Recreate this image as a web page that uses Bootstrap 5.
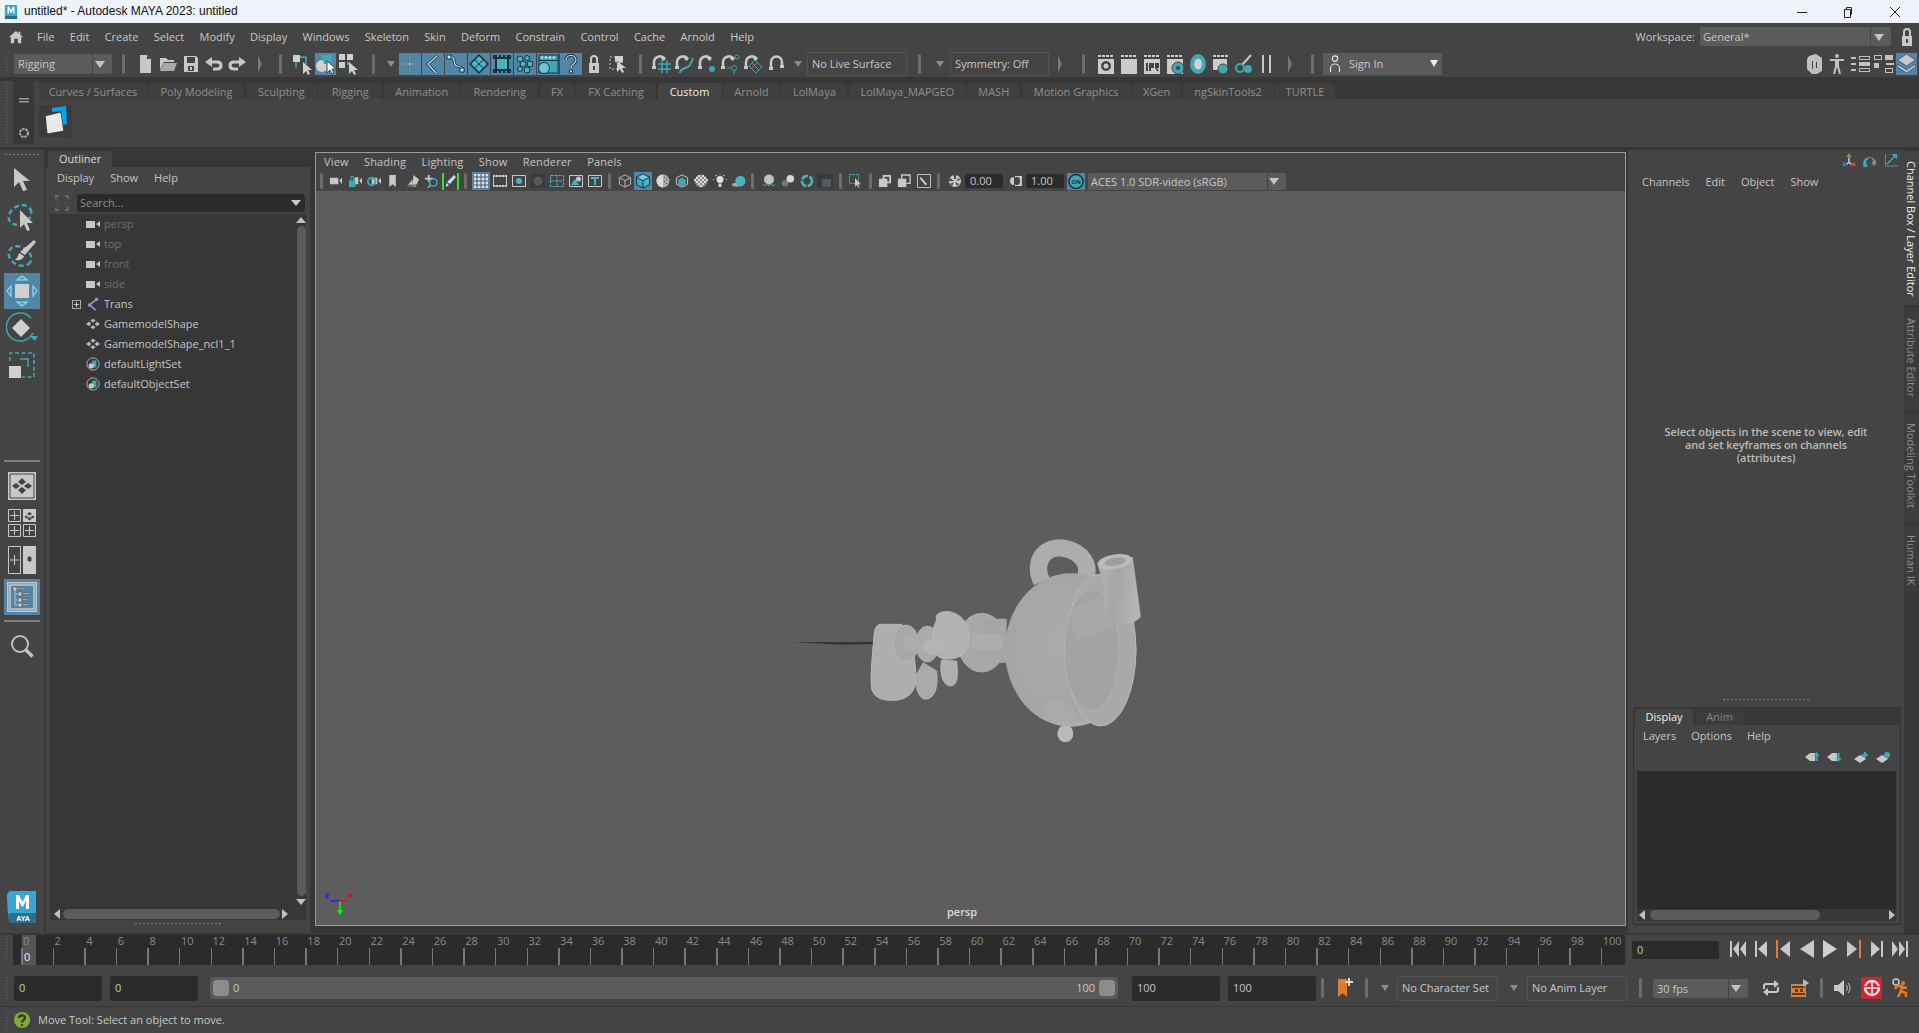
<!DOCTYPE html>
<html lang="en">
<head>
<meta charset="UTF-8" />
<meta name="viewport" content="width=device-width, initial-scale=1" />
<title>untitled* - Autodesk MAYA 2023: untitled</title>
<link href="https://cdn.jsdelivr.net/npm/bootstrap@5.3.0/dist/css/bootstrap.min.css" rel="stylesheet" />
<style>
  html, body { height: 100%; }
  body { width: 1919px; height: 1033px; overflow: hidden; background: #444; color: #c8c8c8; font: 11px/14px "Open Sans", sans-serif; }
  svg { flex: none; display: block; }
  .l1 { margin-left: 1px; } .l2 { margin-left: 2px; } .l3 { margin-left: 3px; } .l4 { margin-left: 4px; } .l5 { margin-left: 5px; }
  .l6 { margin-left: 6px; } .l7 { margin-left: 7px; } .l8 { margin-left: 8px; } .l9 { margin-left: 9px; } .l10 { margin-left: 10px; }
  .l11 { margin-left: 11px; } .l12 { margin-left: 12px; } .l13 { margin-left: 13px; } .l14 { margin-left: 14px; } .l15 { margin-left: 15px; } .l17 { margin-left: 17px; } .l19 { margin-left: 19px; } .l20 { margin-left: 20px; }
  .i14 { width: 14px; height: 14px; } .i16 { width: 16px; height: 16px; } .i18 { width: 18px; height: 18px; } .i20 { width: 20px; height: 20px; } .i22 { width: 22px; height: 22px; }
  .grip { width: 4px; flex: none; background: radial-gradient(circle, #6f6f6f 0.8px, transparent 1px) 0 0 / 3px 3px; }
  .vbar { width: 3px; height: 20px; flex: none; border-radius: 2px; background: #6d6d6d; }
  .vbar-s { height: 16px; }
  .darr { width: 0; height: 0; flex: none; border: 4px solid transparent; border-top: 6px solid #8b8b8b; border-bottom: 0; }
  .rarr { width: 0; height: 0; flex: none; border: 9px solid transparent; border-left: 4px solid #777; border-right: 0; }
  .combo { background: #5b5b5b; color: #c8c8c8; border-radius: 2px; position: relative; }
  .combo::after { content: ""; position: absolute; right: 7px; top: 50%; margin-top: -3px; border: 5px solid transparent; border-top: 7px solid #c4c4c4; border-bottom: 0; }
  .fieldbox { background: #2b2b2b; color: #c8c8c8; border-radius: 2px; padding-left: 5px; display: flex; align-items: center; }
  .outbox { border: 1px solid #545454; border-radius: 2px; color: #c8c8c8; display: flex; align-items: center; padding-left: 4px; height: 24px; }

  #titlebar { height: 23px; background: #eef3fa; color: #111; font: 12px/23px "Liberation Sans", sans-serif; flex: none; }
  #menubar { height: 27px; flex: none; padding-left: 9px; }
  #menubar .items { margin-left: 14px; gap: 15.35px; }
  #statusline { height: 27px; flex: none; padding-left: 5px; }
  #statusline .grip { height: 20px; }
  .rigging { width: 98px; height: 20px; line-height: 20px; padding-left: 4px; }
  .rigging::before { content: ""; position: absolute; left: 78px; top: 0; bottom: 0; width: 1px; background: #444; }
  .bluegrp { gap: 1px; }
  .bluecell { width: 22px; height: 22px; background: #5285a6; display: flex; align-items: center; justify-content: center; }
  .hot { background: #5285a6; display: flex; align-items: center; justify-content: center; }
  .hot21 { width: 21px; height: 22px; }
  .signin { width: 119px; height: 22px; background: #5b5b5b; display: flex; align-items: center; padding-left: 5px; gap: 7px; position: relative; }
  .signin::after { content: ""; position: absolute; right: 4px; top: 7px; border: 4px solid transparent; border-top: 7px solid #eee; border-bottom: 0; }
  .wksp { width: 191px; height: 19px; line-height: 19px; padding-left: 3px; }
  .wksp::before { content: ""; position: absolute; right: 20px; top: 0; bottom: 0; width: 1px; background: #444; }

  #darkline { height: 4px; flex: none; background: #373737; }
  #shelf { height: 66px; flex: none; padding-left: 5px; }
  #shelf .grip { height: 63px; }
  .shelfside { width: 21px; height: 63px; background: #373737; display: flex; flex-direction: column; align-items: center; padding-top: 17px; margin-left: 4px; }
  .shelfmain { flex: 1; margin-left: 5px; }
  .shelftabs { height: 18px; background: #373737; padding-top: 2px; gap: 1.44px; }
  .shelftabs .stab { height: 16px; line-height: 18px; background: #3f3f3f; color: #8f8f8f; text-align: center; border-radius: 3px 3px 0 0; flex: none; overflow: hidden; }
  .shelftabs .stab.on { background: #444; color: #eee; }
  .shelficon { width: 33px; height: 32px; background: #3c3c3c; border-radius: 3px; margin-top: 6px; }
  #sepline { height: 3px; flex: none; background: #373737; }

  #mainrow { height: 783px; flex: none; background: #373737; }
  #toolbox { width: 44px; flex: none; background: #444; position: relative; }
  .toolbtn { width: 36px; height: 36px; display: flex; align-items: center; justify-content: center; margin-left: 4px; margin-top: 1px; flex: none; }
  .toolsep { height: 2px; width: 36px; background: #7d7d7d; margin-left: 4px; flex: none; }
  .mayalogo { margin: auto 0 10px 7px; }
  #outliner { width: 264px; flex: none; margin-left: 2px; }
  .otab { width: 64px; height: 16px; background: #444; color: #ddd; border-radius: 3px 3px 0 0; line-height: 16px; padding-left: 11px; margin-left: 2px; margin-top: 1px; }
  .opanel { flex: 1; background: #444; display: flex; flex-direction: column; padding: 0 4px 8px 4px; min-height: 0; }
  .omenu { gap: 16px; height: 22px; padding-left: 7px; padding-top: 4px; color: #c4c4c4; }
  .osearch { height: 18px; margin-top: 5px; margin-left: 5px; margin-right: 1px; }
  .osearchbox { flex: 1; margin-left: 8px; background: #2b2b2b; color: #8d8d8d; border-radius: 2px; line-height: 18px; padding-left: 3px; position: relative; }
  .osearchbox::after { content: ""; position: absolute; right: 4px; top: 6px; border: 5px solid transparent; border-top: 6px solid #c8c8c8; border-bottom: 0; }
  .olistwrap { flex: 1; min-height: 0; margin-top: 2px; }
  .olist { flex: 1; background: #373737; }
  .orow { height: 20px; display: flex; align-items: center; padding-left: 36px; position: relative; color: #c4c4c4; }
  .orow.dim { color: #707070; }
  .orow svg { margin-right: 4px; }
  .plus { position: absolute; left: 22px; top: 6px; width: 9px; height: 9px; border: 1px solid #a9a9a9; }
  .plus::before { content: ""; position: absolute; left: 1px; top: 3px; width: 5px; height: 1px; background: #ccc; }
  .plus::after { content: ""; position: absolute; left: 3px; top: 1px; width: 1px; height: 5px; background: #ccc; }
  .vscroll { width: 10px; background: #373737; display: flex; flex-direction: column; align-items: center; }
  .vthumb { flex: 1; width: 9px; background: #5b5b5b; border-radius: 5px; margin: 3px 0; }
  .tri-up { width: 0; height: 0; border: 5px solid transparent; border-bottom: 6px solid #c0c0c0; border-top: 0; margin-top: 3px; }
  .tri-dn { width: 0; height: 0; border: 5px solid transparent; border-top: 6px solid #c0c0c0; border-bottom: 0; margin-bottom: 3px; }
  .tri-lt { width: 0; height: 0; flex: none; border: 5px solid transparent; border-right: 6px solid #c0c0c0; border-left: 0; }
  .tri-rt { width: 0; height: 0; flex: none; border: 5px solid transparent; border-left: 6px solid #c0c0c0; border-right: 0; }
  .hscroll { height: 12px; flex: none; background: #373737; display: flex; align-items: center; padding: 0 1px; gap: 2px; }
  .hthumb { height: 10px; background: #5b5b5b; border-radius: 5px; }
  .griph { height: 3px; flex: none; background: radial-gradient(circle, #7b7b7b 0.7px, transparent 1px) 0 0 / 4px 3px; }

  #viewwrap { width: 1311px; flex: none; margin-left: 5px; margin-top: 2px; margin-bottom: 7px; border: 1px solid #9a9a9a; background: #444; display: flex; flex-direction: column; }
  .vmenu { height: 18px; flex: none; gap: 15.4px; letter-spacing: .15px; padding-left: 8px; padding-top: 2px; color: #c4c4c4; }
  .vtools { height: 20px; flex: none; padding-left: 4px; }
  .viewport3d { flex: 1; background: #5d5d5d; position: relative; }
  .model { position: absolute; left: 524px; top: 329px; overflow: visible; }
  .gizmo { position: absolute; left: 9px; bottom: 7px; }
  .perspname { position: absolute; left: 631px; bottom: 6px; color: #dcdcdc; font-weight: 600; }
  .vfield { background: #2b2b2b; height: 14px; line-height: 14px; padding-left: 5px; width: 38px; border-radius: 2px; }
  .acescombo { width: 198px; height: 17px; line-height: 17px; padding-left: 3px; }
  .acescombo::before { content: ""; position: absolute; right: 18px; top: 0; bottom: 0; width: 1px; background: #444; }
  .greenbox { width: 17px; height: 17px; border-left: 2px solid #2de52d; border-right: 2px solid #2de52d; }
  .tb-blue { width: 18px; height: 18px; }

  #rightcol { flex: 1; margin-left: 2px; min-width: 0; }
  .rpanel { width: 276px; flex: none; display: flex; flex-direction: column; background: #444; }
  .rtop { flex: none; height: 548px; position: relative; }
  .ricons { height: 24px; gap: 7px; padding-right: 6px; padding-top: 3px; justify-content: flex-end; }
  .rmenu { gap: 16px; padding-left: 14px; padding-top: 1px; color: #c4c4c4; }
  .rmsg { position: absolute; left: 0; right: 0; top: 275px; text-align: center; line-height: 13px; color: #bbb; font-weight: 600; letter-spacing: -.1px; }
  .rgrip { width: 88px; margin: 0 auto 0 94px; }
  .layerbox { margin: 6px 3px 0 5px; height: 218px; background: #373737; padding-top: 2px; display: flex; flex-direction: column; }
  .ltabs { height: 16px; gap: 3px; padding-left: 2px; flex: none; }
  .ltab { height: 16px; line-height: 15px; text-align: center; border-radius: 3px 3px 0 0; }
  .ltab.on { width: 58px; background: #444; color: #eee; }
  .ltab.off { width: 47px; background: #3c3c3c; color: #858585; }
  .lpanel { background: #444; flex: 1; display: flex; flex-direction: column; border: 1px solid #2f2f2f; border-top: 0; padding: 0 4px 3px 3px; }
  .lmenu { gap: 15px; height: 20px; padding-left: 6px; padding-top: 4px; color: #c4c4c4; flex: none; }
  .licons { height: 16px; margin-top: 4px; flex: none; justify-content: flex-end; padding-right: 5px; gap: 7px; }
  .llist { flex: 1; background: #2b2b2b; margin-top: 6px; }
  .sidetabs { width: 15px; flex: none; background: #373737; padding-top: 1px; gap: 3px; }
  .vtab { writing-mode: vertical-rl; background: #3c3c3c; color: #8c8c8c; line-height: 15px; width: 15px; padding-top: 10px; flex: none; }
  .vtab.on { background: #444; color: #eee; }
  #vt1 { height: 154px; } #vt2 { height: 102px; } #vt3 { height: 109px; } #vt4 { height: 68px; }

  #timeline { height: 35px; flex: none; background: #444; padding-left: 5px; }
  #timeline .grip { height: 28px; }
  .tslider { width: 1612px; height: 30px; background: #2b2b2b; margin-left: 4px; position: relative; display: flex; padding-left: 8px; }
  .tcell { width: 31.6px; flex: none; position: relative; color: #8a8a8a; padding-left: 2px; line-height: 11px; }
  .tcell::before { content: ""; position: absolute; left: 0; bottom: 0; width: 1.5px; height: 17px; background: #777; }
  .tcur { position: absolute; left: 9px; top: 0; bottom: 0; width: 14px; background: #555; }
  .tcurnum { position: absolute; left: 11px; top: 15px; color: #eee; }
  .tfield { width: 87px; height: 18px; margin-left: 7px; margin-top: 6px; }
  .playicons { gap: 9.1px; margin-left: 11px; margin-top: 5px; height: 18px; }

  #rangerow { height: 36px; flex: none; padding-left: 5px; }
  #rangerow .grip { height: 24px; }
  .rfield { width: 88px; height: 25px; }
  .rslider { width: 908px; height: 22px; background: #5b5b5b; border-radius: 4px; position: relative; display: flex; align-items: center; padding: 0 3px; }
  .rhandle { width: 16px; height: 16px; background: #8d8d8d; border-radius: 4px; flex: none; }
  .fps { width: 95px; height: 19px; line-height: 19px; padding-left: 4px; }
  .fps::before { content: ""; position: absolute; right: 19px; top: 0; bottom: 0; width: 1px; background: #444; }
  .redbox { width: 21px; height: 22px; background: #d2232f; display: flex; align-items: center; justify-content: center; }

  #helpline { height: 26px; flex: none; padding-left: 5px; background: #444; }
  #helpline .grip { height: 20px; }
  #topsep2 { height: 2px; flex: none; background: #373737; }
  #botsep { height: 1px; flex: none; background: #373737; }

  #winctl svg:nth-child(1) { margin-right: 36px; }
  #winctl svg:nth-child(2) { margin-right: 36px; }
  #winctl svg:nth-child(3) { margin-right: 18px; }
  #liveb { width: 100px; } #symb { width: 99px; }
  #charb { width: 101px; height: 25px; } #animb { width: 100px; height: 25px; }
  #toolgrip { margin: 3px 4px 0; }
  #t1 { margin-top: 5.5px; }
  #ts1 { margin-top: 77.5px; } #t7 { margin-top: 6px; } #ts2 { margin-top: 5px; } #t11 { margin-top: 5.5px; }
  #ogrip { width: 88px; margin: 2px auto 0; }
  #lthumb { width: 170px; }
  .logotxt { font: 700 7px "Liberation Sans", sans-serif; fill: #fff; }
  .ontxt { font: 700 6px "Liberation Sans", sans-serif; fill: #15303c; }
</style>
</head>
<body class="d-flex flex-column">

<svg width="0" height="0" class="position-absolute">
  <defs>
    <radialGradient id="bodygrad" cx="45%" cy="45%" r="60%"><stop offset="0" stop-color="#ababab"/><stop offset="0.8" stop-color="#a5a5a5"/><stop offset="1" stop-color="#b6b6b6"/></radialGradient>
    <linearGradient id="cupgrad" x1="0" x2="1" y1="0" y2="0.2"><stop offset="0" stop-color="#b4b4b4"/><stop offset="0.5" stop-color="#a6a6a6"/><stop offset="1" stop-color="#b4b4b4"/></linearGradient>

    <symbol id="home" viewBox="0 0 16 14"><path fill="#c8c8c8" d="M8 0 0 7h2v7h4V9h4v5h4V7h2l-3-2.600V1h-2v1.700z"/></symbol>
    <symbol id="page" viewBox="0 0 18 18"><path fill="#c8c8c8" d="M4 0h7l4 4v14H4z"/><path fill="#444" d="M11 0v4h4z"/></symbol>
    <symbol id="open" viewBox="0 0 18 18"><path fill="#c8c8c8" d="M1 3h6l2 2h6v2H5L1 15z"/><path fill="#a8a8a8" d="M5 8h13l-3 8H1z"/></symbol>
    <symbol id="save" viewBox="0 0 18 18"><path fill="#c8c8c8" d="M2 1h12l2 2v14H2z"/><path fill="#444" d="M5 2h8v6H5zM6 11h6v5H6z"/><path fill="#c8c8c8" d="M8 12h2v3H8z"/></symbol>
    <symbol id="undo" viewBox="0 0 18 18"><path fill="none" stroke="#c8c8c8" stroke-width="3" d="M5 7h7c2.500 0 4 1.500 4 3.500S14.500 14 12 14H8"/><path fill="#c8c8c8" d="M7 2v10L0 7z"/></symbol>
    <symbol id="redo" viewBox="0 0 18 18"><path fill="none" stroke="#c8c8c8" stroke-width="3" d="M13 7H6c-2.500 0-4 1.500-4 3.500S3.500 14 6 14h4"/><path fill="#c8c8c8" d="M11 2v10l7-5z"/></symbol>
    <symbol id="mode1" viewBox="0 0 21 22"><path fill="#d0d0d0" d="M1 2h7v7H1z"/><path fill="none" stroke="#3fa7b5" stroke-width="1.500" d="M8 4h6v7M4 9v6"/><path fill="#d0d0d0" d="M11 9v12l3-3 2 4 2-1-2-4h4z"/></symbol>
    <symbol id="mode2" viewBox="0 0 21 22"><circle cx="7" cy="13" r="6" fill="#d0d0d0"/><path fill="#3fa7b5" d="M6 2h11v9H9z"/><path fill="#fff" stroke="#444" d="M12 8v12l3-3 2 4 2-1-2-4h4z"/></symbol>
    <symbol id="mode3" viewBox="0 0 21 22"><path fill="#d0d0d0" d="M1 1h6v6H1zM9 1h6v6H9zM1 9h6v6H1z"/><path fill="#3fa7b5" d="M9 9h3v3H9z"/><path fill="#d0d0d0" d="M11 9v12l3-3 2 4 2-1-2-4h4z"/></symbol>
    <symbol id="m-cross" viewBox="0 0 22 22"><path fill="none" stroke="#1b3140" stroke-width="2.200" d="M11 2v18M2 11h18"/><path fill="none" stroke="#b8ecf2" d="M11 2v18M2 11h18"/></symbol>
    <symbol id="m-joint" viewBox="0 0 22 22"><path fill="none" stroke="#1b3140" stroke-width="2.800" d="M15 3 6 11l8 9"/><path fill="none" stroke="#b8ecf2" stroke-width="1.200" d="M15 3 6 11l8 9"/></symbol>
    <symbol id="m-curve" viewBox="0 0 22 22"><path fill="none" stroke="#1b3140" stroke-width="2.800" d="M4 4c8-1 3 8 8 9s4 2 5 5"/><path fill="none" stroke="#b8ecf2" stroke-width="1.200" d="M4 4c8-1 3 8 8 9s4 2 5 5"/><path fill="#b8ecf2" stroke="#1b3140" d="M2 2h4v4H2zM15 15h4v4h-4z"/></symbol>
    <symbol id="m-surf" viewBox="0 0 22 22"><path fill="#4bb2c0" stroke="#1b3140" stroke-width="1.500" d="M11 2l9 9-9 9-9-9z"/><path fill="none" stroke="#1b3140" d="M7 7l8 8M15 7l-8 8"/></symbol>
    <symbol id="m-deform" viewBox="0 0 22 22"><path fill="#4bb2c0" stroke="#1b3140" stroke-width="2" d="M5 5h12v12H5z"/><path fill="#1b3140" d="M2 2h4v4H2zM16 2h4v4h-4zM2 16h4v4H2zM16 16h4v4h-4zM8 2h2v3H8zM12 2h2v3h-2zM8 17h2v3H8zM12 17h2v3h-2z"/></symbol>
    <symbol id="m-dyn" viewBox="0 0 22 22"><g fill="#4bb2c0" stroke="#1b3140"><circle cx="6" cy="6" r="3"/><circle cx="13" cy="5" r="2.500"/><circle cx="9" cy="11" r="3"/><circle cx="16" cy="11" r="3"/><circle cx="6" cy="16" r="2.500"/><circle cx="13" cy="17" r="3"/></g></symbol>
    <symbol id="m-rend" viewBox="0 0 22 22"><path fill="#3fa7b5" stroke="#1b3140" d="M2 2h19v18H2z"/><path fill="#1b3140" d="M2 7h19v1H2z"/><path fill="#e0e0e0" d="M4 3.500h2v2H4zM8 3.500h2v2H8zM12 3.500h2v2h-2zM16 3.500h2v2h-2z"/><circle cx="7" cy="15" r="5.500" fill="#6fc3cf" stroke="#1b3140"/></symbol>
    <symbol id="m-help" viewBox="0 0 22 22"><path fill="none" stroke="#1b3140" stroke-width="3" d="M6 7c0-6 10-6 10 0 0 4-5 4-5 8"/><path fill="none" stroke="#b8ecf2" stroke-width="1.200" d="M6 7c0-6 10-6 10 0 0 4-5 4-5 8"/><path fill="#b8ecf2" stroke="#1b3140" d="M9.500 17h3v3h-3z"/></symbol>
    <symbol id="lock" viewBox="0 0 14 20"><path fill="none" stroke="#c8c8c8" stroke-width="2" d="M4 9V5a3 3 0 0 1 6 0v4"/><path fill="#c8c8c8" d="M2 9h10v10H2z"/><path fill="#444" d="M6 12h2v4H6z"/></symbol>
    <symbol id="selmask" viewBox="0 0 18 20"><path fill="none" stroke="#c8c8c8" stroke-dasharray="2 2" d="M1 3h12v12H1z"/><path fill="#d0d0d0" d="M6 2h8v5l-2 2-6-1zM8 7v11l3-3 2 4 2-1-2-4h4z"/></symbol>
    <symbol id="magnet" viewBox="0 0 20 20"><path fill="none" stroke="#c8c8c8" stroke-width="2.500" d="M3 13V8a6 6 0 0 1 10.500-3.500"/><path fill="#c8c8c8" d="M1 12h4v3H1zM12 2l3 2-2 3-3-2z"/></symbol>
    <symbol id="sn-grid" viewBox="0 0 20 20"><use href="#magnet"/><path fill="none" stroke="#3fa7b5" stroke-width="1.500" d="M11 6v13M16 6v13M7 10h13M7 15h13"/></symbol>
    <symbol id="sn-curve" viewBox="0 0 20 20"><use href="#magnet"/><path fill="none" stroke="#3fa7b5" stroke-width="2" d="M6 19c0-5 6-4 9-7 2-2 3-5 4-8"/></symbol>
    <symbol id="sn-point" viewBox="0 0 20 20"><use href="#magnet"/><circle cx="15" cy="15" r="3" fill="#3fa7b5"/></symbol>
    <symbol id="sn-view" viewBox="0 0 20 20"><use href="#magnet"/><circle cx="14" cy="14" r="2.500" fill="none" stroke="#3fa7b5"/><circle cx="17" cy="3" r="2" fill="none" stroke="#3fa7b5"/><path stroke="#3fa7b5" d="M14 17v3M7 14h4"/></symbol>
    <symbol id="sn-surf" viewBox="0 0 20 20"><use href="#magnet"/><path fill="none" stroke="#3fa7b5" d="M12 6l7 7-6 6-7-7zM9 9l7 7M15 8l-6 6"/></symbol>
    <symbol id="sn-live" viewBox="0 0 20 20"><path fill="none" stroke="#c8c8c8" stroke-width="2.500" d="M5 14V8a5.500 5.500 0 0 1 11 0v4"/><path fill="#c8c8c8" d="M3 13h4v3H3zM14 11h4v3h-4z"/></symbol>
    <symbol id="r-hist" viewBox="0 0 18 22"><path fill="#ccc" d="M1 2h3v2H1zM5 2h3v2H5zM9 2h3v2H9zM13 2h3v2h-3zM1 6h16v15H1z"/><circle cx="9" cy="13" r="5" fill="#444"/><circle cx="9" cy="13" r="2.500" fill="#ccc"/></symbol>
    <symbol id="r-plain" viewBox="0 0 18 22"><path fill="#ccc" d="M1 2h3v2H1zM5 2h3v2H5zM9 2h3v2H9zM13 2h3v2h-3zM1 6h16v15H1z"/></symbol>
    <symbol id="r-ipr" viewBox="0 0 18 22"><path fill="#ccc" d="M1 2h3v2H1zM5 2h3v2H5zM9 2h3v2H9zM13 2h3v2h-3zM1 6h16v15H1z"/><path fill="#444" d="M3 10h2v8H3zM6 10h5v5H8v3H6zM12 10h4v5h-2l2 3h-2l-2-3z"/></symbol>
    <symbol id="r-gear" viewBox="0 0 18 22"><path fill="#ccc" d="M1 2h3v2H1zM5 2h3v2H5zM9 2h3v2H9zM13 2h3v2h-3zM1 6h16v15H1z"/><circle cx="12" cy="15" r="6" fill="#3fa7b5" stroke="#444"/><circle cx="12" cy="15" r="2" fill="#444"/></symbol>
    <symbol id="r-eye" viewBox="0 0 18 22"><ellipse cx="9" cy="11" rx="8" ry="10" fill="#3fa7b5"/><ellipse cx="9" cy="11" rx="4" ry="5.500" fill="#d0d0d0"/></symbol>
    <symbol id="r-hyp" viewBox="0 0 18 22"><path fill="#ccc" d="M1 2h3v2H1zM5 2h3v2H5zM9 2h3v2H9zM13 2h3v2h-3zM1 6h14v11H1z"/><circle cx="11" cy="16" r="5" fill="#3fa7b5" stroke="#444"/></symbol>
    <symbol id="r-tools" viewBox="0 0 18 22"><path fill="none" stroke="#c8c8c8" stroke-width="2" d="M16 2 7 12"/><circle cx="5" cy="15" r="4" fill="none" stroke="#3fa7b5" stroke-width="2"/><circle cx="13" cy="16" r="4" fill="#3fa7b5"/></symbol>
    <symbol id="r-pause" viewBox="0 0 18 22"><path fill="#c8c8c8" d="M4 2h2v18H4zM11 2h2v18h-2z"/></symbol>
    <symbol id="person" viewBox="0 0 14 20"><circle cx="7" cy="4" r="3" fill="none" stroke="#eee" stroke-width="1.200"/><path fill="none" stroke="#eee" stroke-width="1.200" d="M2 19v-4a5 5 0 0 1 10 0v4"/></symbol>
    <symbol id="rt-model" viewBox="0 0 21 22"><path fill="#c0c0c0" d="M5 3l7-2 6 4v13l-5 3H8L3 16V6zM10 6l5 1v9l-5 2z"/><path fill="#444" d="M8 8h1v8H8zM12 9h1v6h-1z"/></symbol>
    <symbol id="rt-hik" viewBox="0 0 21 22"><circle cx="10" cy="3" r="2" fill="#c0c0c0"/><path fill="#c0c0c0" d="M3 6h14v2h-5v5l2 8h-2l-2-7-2 7H6l2-8V8H3z"/></symbol>
    <symbol id="rt-lay1" viewBox="0 0 21 22"><path fill="#c0c0c0" d="M1 4h5v2H1zM9 3h11v4H9zM1 10h5v2H1zM9 9h11v4H9zM1 16h5v2H1zM9 15h11v4H9z"/><path fill="#444" d="M10 4h9v2h-9zM10 16h9v2h-9z"/></symbol>
    <symbol id="rt-lay2" viewBox="0 0 21 22"><path fill="#c0c0c0" d="M1 2h8v5H1zM12 2h8v5h-8zM13 10h8v2h-8zM1 10h5v5H1zM12 15h8v5h-8z"/><path fill="#444" d="M2 3h6v3H2zM13 16h6v3h-6z"/></symbol>
    <symbol id="rt-layer" viewBox="0 0 21 24"><path fill="#c8c8c8" stroke="#3f6580" d="M10.500 2l9 6-9 6-9-6z"/><path fill="#c8c8c8" stroke="#3f6580" d="M1.500 12l9 6 9-6v3l-9 6-9-6z"/></symbol>

    <symbol id="t-select" viewBox="0 0 20 26"><path fill="#c8c8c8" d="M2 1v19l5-5 4 9 4-1-4-9h7z"/></symbol>
    <symbol id="t-lasso" viewBox="0 0 30 30"><ellipse cx="13" cy="13" rx="12" ry="9" transform="rotate(-30 13 13)" fill="none" stroke="#3fa7b5" stroke-width="2.500" stroke-dasharray="5 3"/><path fill="#c8c8c8" d="M13 8v18l4-4 3 7 3-1-3-7h6z"/></symbol>
    <symbol id="t-paint" viewBox="0 0 30 30"><ellipse cx="13" cy="17" rx="12" ry="9" transform="rotate(30 13 17)" fill="none" stroke="#3fa7b5" stroke-width="2.500" stroke-dasharray="5 3"/><path fill="#c8c8c8" d="M27 1l2 2-11 13-5-3zM12 14l5 3c-1 4-5 5-9 4 2-1 3-4 4-7z"/></symbol>
    <symbol id="t-move" viewBox="0 0 36 36"><path fill="#d0d0d0" d="M11 11h14v14H11z"/><g fill="none" stroke="#8fe0ea" stroke-width="1.200"><path fill="#3fa7b5" d="M18 3l5 4H13zM18 33l5-4H13z"/><path d="M3 18l4-5v10zM33 18l-4-5v10z"/></g></symbol>
    <symbol id="t-rotate" viewBox="0 0 32 32"><path fill="none" stroke="#3fa7b5" stroke-width="1.500" d="M27 21A14 14 0 1 1 25 6"/><path fill="#3fa7b5" d="M24 24h8l-3 5z"/><path fill="#d0d0d0" d="M15 7l9 9-9 9-9-9z"/></symbol>
    <symbol id="t-scale" viewBox="0 0 28 28"><path fill="none" stroke="#3fa7b5" stroke-width="1.500" stroke-dasharray="4 2.500" d="M2 10V2h24v24H14"/><path fill="none" stroke="#3fa7b5" stroke-width="1.500" d="M12 8h8v8"/><path fill="#d0d0d0" d="M1 15h12v12H1z"/></symbol>
    <symbol id="t-diamond" viewBox="0 0 28 28"><path fill="#c8c8c8" d="M0 0h28v28H0z"/><path fill="none" stroke="#444" d="M2 2h24v24H2z"/><path fill="#444" d="M14 6l4 4-4 3-4-3zM8 11l4 3-4 3-4-3zM20 11l4 3-4 3-4-3zM14 15l4 3-4 4-4-4z"/></symbol>
    <symbol id="t-four" viewBox="0 0 28 28"><g fill="none" stroke="#c8c8c8"><path d="M.5.500h12v12H.5zM.5 15.500h12v12H.5zM15.500 15.500h12v12h-12z"/><path d="M6.500 2v9M2 6.500h9M6.500 17v9M2 21.500h9M21.500 17v9M17 21.500h9"/></g><path fill="#c8c8c8" d="M15 0h13v13H15z"/><path fill="#444" d="M21.500 3l2.500 2-2.500 1.500L19 5zM18 6.500l2.500 1.500L18 9.500 16.500 8zM25 6.500 26.500 8 25 9.500 22.500 8zM21.500 8l2.500 1.500-2.500 2L19 9.500z"/></symbol>
    <symbol id="t-two" viewBox="0 0 28 28"><g fill="none" stroke="#c8c8c8"><path d="M.5.500h12v27H.5z"/><path d="M6.500 9v10M2 14h9"/></g><path fill="#c8c8c8" d="M15 0h13v28H15z"/><path fill="#444" d="M21.500 10l2.500 2-1 1 1 1-1 1-1.500 1-2.500-2 1-1-1-1z"/></symbol>
    <symbol id="t-outl" viewBox="0 0 30 30"><g fill="none" stroke="#c8c8c8" stroke-width="1.500"><path d="M.8.800h28.400v28.400H.8zM3 3h24v24H3z"/></g><path fill="#c8c8c8" stroke="#444" stroke-width=".5" d="M6 5h4v4H6zM10 6h8v1.500h-8zM11 10h4v4h-4zM15 11h8v1.500h-8zM11 16h4v4h-4zM15 17h6v1.500h-6zM11 21h4v4h-4zM15 22h7v1.500h-7z"/><path fill="none" stroke="#9dc2d6" d="M8 9v14h3M8 12h3M8 18h3"/></symbol>
    <symbol id="t-search" viewBox="0 0 24 24"><circle cx="10" cy="10" r="8" fill="none" stroke="#c0c0c0" stroke-width="2"/><path stroke="#c0c0c0" stroke-width="3.500" d="M15.500 15.500l7 7"/></symbol>
    <symbol id="logo" viewBox="0 0 30 32"><path fill="#2f7ea3" d="M0 5 3 31h24V20z"/><path fill="#3aa5d5" d="M4 0h25v22H4C2 22 1 24 1 26L0 5c0-3 2-5 4-5z"/><path fill="#2c6f8c" d="M4 22h25v10H4c-2 0-3-2-3-5s1-5 3-5z"/><path fill="#fff" d="M9 4h3l3.500 7L19 4h3v14h-3v-8l-3 5.500h-1.200L12 10v8H9z"/><text x="16" y="30" text-anchor="middle" class="logotxt">AYA</text></symbol>
    <symbol id="shelfic" viewBox="0 0 33 32"><path fill="#00a4ef" d="M13 3l14-2 1 18-4 1-2-14-9 1z"/><path fill="#e8e8e8" d="M7 11l14-3c1 0 1 1 1 1l2 17-15 2c-1 0-1-1-1-1z" transform="rotate(-2 15 18)"/></symbol>

    <symbol id="cam" viewBox="0 0 14 10"><path fill="#c8c8c8" d="M0 2h9v7H0zM10 5l4-3v6z"/></symbol>
    <symbol id="seticon" viewBox="0 0 16 16"><circle cx="8" cy="8" r="7" fill="none" stroke="#c0c0c0"/><path fill="#3fa7b5" d="M7 4h5v8H7z"/><circle cx="6" cy="10" r="3" fill="#c8c8c8"/></symbol>
    <symbol id="shapeic" viewBox="0 0 16 12"><path fill="#b8b8b8" d="M8 0l3 2-3 2.500L5 2zM3.500 3 6 6 3.500 8.500 0 6zM12.500 3 16 6l-3.500 2.500L10 6zM8 7.500l3 2L8 12 5 9.500z"/></symbol>
    <symbol id="transic" viewBox="0 0 16 16"><circle cx="12" cy="2.500" r="2" fill="#a58cc9"/><path fill="none" stroke="#a58cc9" stroke-width="2" d="M12 3 4 9l7 6"/><circle cx="4" cy="9" r="2" fill="#a58cc9"/></symbol>
    <symbol id="ol-filter" viewBox="0 0 14 16"><path fill="none" stroke="#666" stroke-width="2" d="M1 4V1h3M10 1h3v3M13 12v3h-3M4 15H1v-3"/><path fill="none" stroke="#5b5b5b" d="M3 7v3M11 7v3"/></symbol>
    <symbol id="v-gen" viewBox="0 0 15 15"><path fill="#c8c8c8" d="M1 4h9v7H1zM11 7l3-3v7z"/></symbol>
    <symbol id="v-lock" viewBox="0 0 15 15"><path fill="#c8c8c8" d="M7 4l4-1v8H7zM12 7l3-3v7z"/><path fill="#3fa7b5" d="M1 7h7v7H1z"/><path fill="none" stroke="#3fa7b5" stroke-width="1.200" d="M3 7V4a1.500 1.500 0 0 1 3 0v3"/></symbol>
    <symbol id="v-gear" viewBox="0 0 15 15"><path fill="#c8c8c8" d="M5 4h6v7H5zM12 7l3-3v7z"/><circle cx="5" cy="8" r="4" fill="none" stroke="#3fa7b5" stroke-width="2"/></symbol>
    <symbol id="v-mark" viewBox="0 0 8 15"><path fill="#c8c8c8" d="M0 1h7v13l-3.500-3L0 14z"/></symbol>
    <symbol id="v-grid2" viewBox="0 0 15 15"><path fill="#c8c8c8" d="M8 1l6 5-4 8-3-1zM1 13l6-7v7z"/><path fill="none" stroke="#444" d="M1 12h12"/></symbol>
    <symbol id="v-frame" viewBox="0 0 15 15"><path fill="#c8c8c8" d="M3 1h2v3h3v2H5v2H3V6H0V4h3z"/><circle cx="9" cy="9" r="4" fill="none" stroke="#4bb2c0" stroke-width="1.500"/><path stroke="#4bb2c0" stroke-width="2" d="M6 12l-3 3"/></symbol>
    <symbol id="v-pen" viewBox="0 0 11 13"><path fill="#bde0ea" d="M9 0l2 2-6 7-3-2zM1 8l3 2-3 2z"/></symbol>
    <symbol id="v-grid" viewBox="0 0 14 14"><path fill="#e0e0e0" d="M0 0h14v14H0z"/><path fill="none" stroke="#395a72" d="M3 0v14M7 0v14M11 0v14M0 3h14M0 7h14M0 11h14"/></symbol>
    <symbol id="v-film" viewBox="0 0 14 14"><path fill="none" stroke="#c8c8c8" d="M.5 1.500h13v11H.5z"/><path fill="#c8c8c8" d="M0 1h14v2H0zM0 11h14v2H0z"/><path fill="#444" d="M2 1.500h1v1H2zM5 1.500h1v1H5zM8 1.500h1v1H8zM11 1.500h1v1h-1zM2 11.500h1v1H2zM5 11.500h1v1H5zM8 11.500h1v1H8zM11 11.500h1v1h-1z"/></symbol>
    <symbol id="v-dot" viewBox="0 0 14 14"><path fill="none" stroke="#c8c8c8" d="M.5 1.500h13v11H.5z"/><circle cx="7" cy="7" r="3" fill="#4bb2c0"/></symbol>
    <symbol id="v-dotd" viewBox="0 0 14 14"><path fill="#3a3a3a" d="M0 0h14v14H0z"/><circle cx="7" cy="7" r="4.500" fill="#585858"/></symbol>
    <symbol id="v-res" viewBox="0 0 14 14"><path fill="none" stroke="#4bb2c0" stroke-dasharray="3 1" d="M.5 1.500h13v11H.5zM7 1v12M1 7h12"/></symbol>
    <symbol id="v-img" viewBox="0 0 14 14"><path fill="none" stroke="#c8c8c8" d="M.5 1.500h13v11H.5z"/><circle cx="9.500" cy="5" r="2.500" fill="#c8c8c8"/><path fill="#4bb2c0" d="M2 11l4-6 4 6z"/></symbol>
    <symbol id="v-t" viewBox="0 0 14 14"><path fill="none" stroke="#c8c8c8" d="M.5 1.500h13v11H.5z"/><path fill="#4bb2c0" d="M3 3h8v2H8v6H6V5H3z"/></symbol>
    <symbol id="c-wire" viewBox="0 0 14 15"><path fill="none" stroke="#bbb" d="M7 1l6 3v7l-6 3-6-3V4zM1 4l6 3 6-3M7 7v7"/></symbol>
    <symbol id="c-solid" viewBox="0 0 16 17"><path fill="#6fd0de" d="M8 1l7 3.500-7 3.500-7-3.500z"/><path fill="#3fa7b5" d="M1 5l7 3.500V16l-7-3.500z"/><path fill="#4bb2c0" d="M15 5 8 8.500V16l7-3.500z"/><path fill="none" stroke="#15303c" d="M8 1l7 3.500v8L8 16l-7-3.500v-8zM1 4.500 8 8l7-3.500M8 8v8"/></symbol>
    <symbol id="c-half" viewBox="0 0 14 14"><circle cx="7" cy="7" r="6.500" fill="#aaa"/><path fill="#d8d8d8" d="M7 .5a6.500 6.500 0 0 0 0 13z"/><path fill="#444" d="M8 3h1v1H8zM10 5h1v1h-1zM8 7h1v1H8zM10 9h1v1h-1z"/></symbol>
    <symbol id="c-tex" viewBox="0 0 14 15"><path fill="#3fa7b5" d="M7 4l4 2v5l-4 2-4-2V6z"/><path fill="none" stroke="#ccc" d="M7 1l6 3v7l-6 3-6-3V4z"/></symbol>
    <symbol id="c-check" viewBox="0 0 14 14"><circle cx="7" cy="7" r="6.500" fill="#888"/><path fill="#ddd" d="M4 1h2v2H4zM8 1h2v2H8zM2 3h2v2H2zM6 3h2v2H6zM10 3h2v2h-2zM0 5h2v2H0zM4 5h2v2H4zM8 5h2v2H8zM12 5h2v2h-2zM2 7h2v2H2zM6 7h2v2H6zM10 7h2v2h-2zM4 9h2v2H4zM8 9h2v2H8zM6 11h2v2H6z"/></symbol>
    <symbol id="c-light" viewBox="0 0 14 14"><circle cx="7" cy="5.500" r="3.500" fill="#e0e0e0"/><path fill="#ccc" d="M5.500 9.500h3V13h-3zM6.500 0h1v1h-1zM0 5h1v1H0zM13 5h1v1h-1zM2 1.500l1-1 1 1-1 1zM10 1.500l1-1 1 1-1 1z"/></symbol>
    <symbol id="c-shad" viewBox="0 0 15 14"><ellipse cx="5" cy="11" rx="5" ry="2" fill="#aaa"/><circle cx="9" cy="7" r="5.500" fill="#4bb2c0"/></symbol>
    <symbol id="c-xray" viewBox="0 0 14 14"><circle cx="7" cy="5.500" r="5" fill="#c0c0c0"/><path fill="none" stroke="#3fa7b5" d="M1 10l2 2 2-2 2 2 2-2 2 2 2-2"/></symbol>
    <symbol id="c-smooth" viewBox="0 0 15 14"><circle cx="4.500" cy="9.500" r="3.500" fill="#777"/><circle cx="10" cy="4.500" r="4" fill="#d8d8d8"/></symbol>
    <symbol id="c-ring" viewBox="0 0 14 14"><circle cx="7" cy="7" r="5" fill="none" stroke="#4bb2c0" stroke-width="2.500" stroke-dasharray="7 1.500"/></symbol>
    <symbol id="c-dark" viewBox="0 0 16 14"><path fill="#3a3a3a" d="M0 0h16v14H0z"/><path fill="#4e5b60" d="M5 5h9v8H5z"/></symbol>
    <symbol id="v-sel" viewBox="0 0 14 14"><path fill="none" stroke="#4bb2c0" stroke-dasharray="2 1" d="M.5.500h9v9h-9z"/><path fill="#c8c8c8" d="M6 4v9l2-2 1.500 3 1-.5L9 10.500h3z"/></symbol>
    <symbol id="g-over" viewBox="0 0 15 15"><path fill="#c8c8c8" d="M5 1h9v9H5z"/><path fill="#444" d="M7 3h5v5H7z"/><path fill="#c8c8c8" d="M1 5h9v9H1z"/></symbol>
    <symbol id="g-corner" viewBox="0 0 15 15"><path fill="none" stroke="#c8c8c8" stroke-width="1.500" d="M5 5V1h9v9h-4"/><path fill="#c8c8c8" d="M1 5h9v9H1z"/></symbol>
    <symbol id="g-cut" viewBox="0 0 15 15"><path fill="none" stroke="#c8c8c8" d="M.5.500h14v14H.5z"/><path fill="#c8c8c8" d="M4 3l7 8-2 1L3 5z"/></symbol>
    <symbol id="g-expo" viewBox="0 0 14 14"><circle cx="7" cy="7" r="6" fill="#c8c8c8"/><g fill="#444"><path d="M6 1h2v4H6zM11 4l1 2-4 1zM11 10l-2 2-2-4zM4 12l-2-2 4-2zM1 7l1-3 4 3z"/></g></symbol>
    <symbol id="g-gam" viewBox="0 0 12 14"><path fill="#c8c8c8" d="M5 2h7v10H5zM4 3v8a4 4 0 0 1 0-8z"/><ellipse cx="7" cy="7" rx="3" ry="4" fill="#444"/></symbol>
    <symbol id="v-on" viewBox="0 0 18 17"><path fill="#5285a6" d="M0 0h18v17H0z"/><circle cx="9" cy="8.500" r="7" fill="#3fa7b5" stroke="#17323e" stroke-width="1.500"/><text x="9" y="10.700" text-anchor="middle" class="ontxt">ON</text></symbol>
    <symbol id="axis3" viewBox="0 0 15 15"><path fill="#6aa84f" d="M7.500 0l3 4.500h-6z"/><path fill="#3d6fd4" d="M0 14l2-5 3 3 0 2z"/><path fill="#d9453d" d="M15 14l-2-5-3 3v2z"/><path stroke="#ddd" stroke-width="1.500" d="M7.500 5v4M5 12l2.500-2 2.500 2"/></symbol>
    <symbol id="crv" viewBox="0 0 15 15"><path fill="#3fa7b5" d="M1 15A7 7 0 1 1 14 12h-3a4 4 0 1 0-7 0l1 3z"/><path fill="#888" d="M14 8a7 7 0 0 1-2 6L9 11l2-3z"/><circle cx="7.500" cy="7" r="2" fill="#444"/></symbol>
    <symbol id="pose" viewBox="0 0 15 15"><path fill="none" stroke="#8a8a8a" d="M1.500 1v13h13"/><path stroke="#3fa7b5" stroke-width="1.500" d="M3 12 13 2"/><path fill="#3fa7b5" d="M8 1h6v6z"/></symbol>
    <symbol id="lup" viewBox="0 0 15 10"><path fill="#c8c8c8" d="M0 5l5-4h5v8H5z"/><path fill="#3fa7b5" d="M11.500 0l3 4h-2v5h-2V4h-2z"/></symbol>
    <symbol id="ldn" viewBox="0 0 15 10"><path fill="#c8c8c8" d="M0 5l5-4h5v8H5z"/><path fill="#3fa7b5" d="M11.500 10l3-4h-2V1h-2v5h-2z"/></symbol>
    <symbol id="ladd" viewBox="0 0 15 11"><path fill="#c8c8c8" d="M0 7l6-4 4 2 2 2-6 4z"/><path fill="#3fa7b5" d="M10 0h2v2h2v2h-2v2h-2V4H8V2h2z"/></symbol>
    <symbol id="lcirc" viewBox="0 0 15 11"><path fill="#c8c8c8" d="M0 7l6-4 4 2 2 2-6 4z"/><circle cx="11" cy="3" r="3" fill="#3fa7b5"/></symbol>
    <symbol id="p-first" viewBox="0 0 16 18"><path fill="#c8c8c8" d="M0 1h2v16H0zM9 1v16L3 9zM16 1v16L10 9z"/></symbol>
    <symbol id="p-prevk" viewBox="0 0 12 18"><path fill="#c8c8c8" d="M0 1h2v16H0zM12 1v16L3 9z"/></symbol>
    <symbol id="p-stepb" viewBox="0 0 15 18"><path fill="#e27b2a" d="M0 0h2v18H0z"/><path fill="#c8c8c8" d="M14 1v16L4 9z"/></symbol>
    <symbol id="p-back" viewBox="0 0 14 18"><path fill="#c8c8c8" d="M14 0v18L0 9z"/></symbol>
    <symbol id="p-play" viewBox="0 0 14 18"><path fill="#d0d0d0" d="M0 0v18l14-9z"/></symbol>
    <symbol id="p-stepf" viewBox="0 0 15 18"><path fill="#c8c8c8" d="M1 1v16L11 9z"/><path fill="#e27b2a" d="M13 0h2v18h-2z"/></symbol>
    <symbol id="p-nextk" viewBox="0 0 12 18"><path fill="#c8c8c8" d="M0 1v16l9-8zM10 1h2v16h-2z"/></symbol>
    <symbol id="p-last" viewBox="0 0 16 18"><path fill="#c8c8c8" d="M0 1v16l6-8zM7 1v16l6-8zM14 1h2v16h-2z"/></symbol>
    <symbol id="bkm" viewBox="0 0 15 20"><path fill="#e27b2a" d="M0 1h9v18l-4.500-4L0 19z"/><path fill="#ddd" d="M10 0h2v3h3v2h-3v3h-2V5H7V3h3z"/></symbol>
    <symbol id="loop" viewBox="0 0 18 16"><path fill="none" stroke="#c8c8c8" stroke-width="2" d="M2 9V6a2 2 0 0 1 2-2h9M16 7v3a2 2 0 0 1-2 2H5"/><path fill="#c8c8c8" d="M12 0l5 4-5 4zM6 8l-5 4 5 4z"/></symbol>
    <symbol id="cache" viewBox="0 0 18 18"><path fill="#e27b2a" d="M0 5h15v13H0z"/><path fill="#444" d="M1 7h13v2H1zM1 14h13v2H1zM4 10h3v3H4zM9 10h3v3H9z"/><path fill="#bbb" d="M12 0l6 4-6 4z"/></symbol>
    <symbol id="speaker" viewBox="0 0 18 18"><path fill="#c8c8c8" d="M0 6h4l6-5v16l-6-5H0z"/><path fill="none" stroke="#c8c8c8" d="M12 6a4 4 0 0 1 0 6M14 4a7 7 0 0 1 0 10"/></symbol>
    <symbol id="sync" viewBox="0 0 18 20"><circle cx="9" cy="10" r="7" fill="none" stroke="#ddd" stroke-width="2.500"/><path fill="#d2232f" d="M0 8h18v1H0z"/><path stroke="#eee" stroke-width="1.500" d="M9 4v12M3 10h12"/></symbol>
    <symbol id="runner" viewBox="0 0 18 20"><circle cx="5" cy="4" r="3" fill="none" stroke="#c8c8c8" stroke-width="1.500"/><circle cx="12" cy="5" r="2" fill="#e27b2a"/><path fill="none" stroke="#e27b2a" stroke-width="2.500" d="M11 7l-1 6-3 6M10 13l5 2v4M10 9l6 1M10 8H6l-2 3"/></symbol>
    <symbol id="help" viewBox="0 0 16 16"><circle cx="8" cy="8" r="8" fill="#83a83a"/><path fill="none" stroke="#2f3a1a" stroke-width="2.200" d="M5 6c0-3.500 6-3.500 6 0 0 2-3 2-3 4.500"/><path fill="#2f3a1a" d="M7 12h2v2H7z"/></symbol>
    <symbol id="gear-s" viewBox="0 0 12 12"><circle cx="6" cy="6" r="4" fill="none" stroke="#aaa" stroke-width="2" stroke-dasharray="2.500 .8"/></symbol>
  </defs>
</svg>

<div id="titlebar" class="d-flex align-items-center">
  <svg class="i14 l4" viewBox="0 0 14 16"><path fill="#37a5cc" d="M0 0h14v12H0z"/><path fill="#1f6d8f" d="M0 12h14v4H0z"/><path fill="#fff" d="M3 2h2l2 4 2-4h2v8H9.500V5L7.500 9h-1L4.500 5v5H3z"/></svg>
  <span class="l6">untitled* - Autodesk MAYA 2023: untitled</span>
  <div class="ms-auto d-flex align-items-center" id="winctl">
    <svg width="10" height="10"><path stroke="#222" d="M0 5.500h10"/></svg>
    <svg width="10" height="12"><path fill="none" stroke="#222" d="M1.500 3.500h6v8h-6zM3.500 3V1.500h5v7"/></svg>
    <svg width="12" height="12"><path stroke="#222" d="M1 1l10 10M11 1 1 11"/></svg>
  </div>
</div>

<div id="menubar" class="d-flex align-items-center">
  <svg class="i14"><use href="#home"/></svg>
  <div class="items d-flex">
    <span>File</span><span>Edit</span><span>Create</span><span>Select</span><span>Modify</span><span>Display</span><span>Windows</span><span>Skeleton</span><span>Skin</span><span>Deform</span><span>Constrain</span><span>Control</span><span>Cache</span><span>Arnold</span><span>Help</span>
  </div>
  <div class="ms-auto d-flex align-items-center">
    <span>Workspace:</span>
    <div class="combo wksp l5">General*</div>
    <svg width="14" height="20" class="l9"><use href="#lock"/></svg>
    <span class="l5"></span>
  </div>
</div>

<div id="statusline" class="d-flex align-items-center">
  <div class="grip"></div>
  <div class="combo rigging l5">Rigging</div>
  <div class="vbar l10"></div>
  <div class="d-flex l11">
    <svg class="i18"><use href="#page"/></svg><svg class="i18 l5"><use href="#open"/></svg><svg class="i18 l5"><use href="#save"/></svg><svg class="i18 l5"><use href="#undo"/></svg><svg class="i18 l5"><use href="#redo"/></svg>
  </div>
  <div class="rarr l12"></div>
  <div class="vbar l17"></div>
  <div class="d-flex align-items-center l10">
    <svg width="21" height="22"><use href="#mode1"/></svg>
    <div class="hot hot21 l2"><svg width="21" height="22"><use href="#mode2"/></svg></div>
    <svg width="21" height="22" class="l2"><use href="#mode3"/></svg>
  </div>
  <div class="vbar l13"></div>
  <div class="darr l12"></div>
  <div class="d-flex bluegrp l4">
    <div class="bluecell"><svg class="i22"><use href="#m-cross"/></svg></div>
    <div class="bluecell"><svg class="i22"><use href="#m-joint"/></svg></div>
    <div class="bluecell"><svg class="i22"><use href="#m-curve"/></svg></div>
    <div class="bluecell"><svg class="i22"><use href="#m-surf"/></svg></div>
    <div class="bluecell"><svg class="i22"><use href="#m-deform"/></svg></div>
    <div class="bluecell"><svg class="i22"><use href="#m-dyn"/></svg></div>
    <div class="bluecell"><svg class="i22"><use href="#m-rend"/></svg></div>
    <div class="bluecell"><svg class="i22"><use href="#m-help"/></svg></div>
  </div>
  <svg width="14" height="20" class="l5"><use href="#lock"/></svg>
  <svg width="18" height="20" class="l8"><use href="#selmask"/></svg>
  <div class="vbar l12"></div>
  <div class="d-flex l9">
    <svg class="i20"><use href="#sn-grid"/></svg><svg class="i20 l3"><use href="#sn-curve"/></svg><svg class="i20 l3"><use href="#sn-point"/></svg><svg class="i20 l3"><use href="#sn-view"/></svg><svg class="i20 l3"><use href="#sn-surf"/></svg><svg class="i20 l3"><use href="#sn-live"/></svg>
  </div>
  <div class="darr l8"></div>
  <div class="outbox l5" id="liveb">No Live Surface</div>
  <div class="vbar l11"></div>
  <div class="darr l15"></div>
  <div class="outbox l6" id="symb">Symmetry: Off</div>
  <div class="rarr l9"></div>
  <div class="vbar l20"></div>
  <div class="d-flex l12">
    <svg width="18" height="22"><use href="#r-hist"/></svg><svg width="18" height="22" class="l5"><use href="#r-plain"/></svg><svg width="18" height="22" class="l5"><use href="#r-ipr"/></svg><svg width="18" height="22" class="l5"><use href="#r-gear"/></svg><svg width="18" height="22" class="l5"><use href="#r-eye"/></svg><svg width="18" height="22" class="l5"><use href="#r-hyp"/></svg><svg width="18" height="22" class="l5"><use href="#r-tools"/></svg><svg width="18" height="22" class="l5"><use href="#r-pause"/></svg>
  </div>
  <div class="rarr l12"></div>
  <div class="vbar l19"></div>
  <div class="signin l9"><svg width="14" height="18"><use href="#person"/></svg><span>Sign In</span></div>
  <div class="ms-auto d-flex align-items-center">
    <svg width="21" height="22"><use href="#rt-model"/></svg><svg width="21" height="22" class="l2"><use href="#rt-hik"/></svg><svg width="21" height="22" class="l2"><use href="#rt-lay1"/></svg><svg width="21" height="22" class="l2"><use href="#rt-lay2"/></svg>
    <div class="hot hot21 l2"><svg width="21" height="24"><use href="#rt-layer"/></svg></div>
    <span class="l2"></span>
  </div>
</div>

<div id="darkline"></div>

<div id="shelf" class="d-flex">
  <div class="grip"></div>
  <div class="shelfside">
    <svg width="12" height="5" class="mb-4"><path fill="#9a9a9a" d="M1 0h10v1.500H1zM1 3h10v1.500H1z"/></svg>
    <svg width="12" height="12"><use href="#gear-s"/></svg>
  </div>
  <div class="shelfmain d-flex flex-column">
    <div class="shelftabs d-flex" id="shelfTabs"></div>
    <div class="shelficon d-flex align-items-center justify-content-center"><svg width="33" height="32"><use href="#shelfic"/></svg></div>
  </div>
</div>
<div id="sepline"></div>

<div id="mainrow" class="d-flex">
  <div id="toolbox" class="d-flex flex-column">
    <div class="griph" id="toolgrip"></div>
    <div class="toolbtn" id="t1"><svg width="20" height="26"><use href="#t-select"/></svg></div>
    <div class="toolbtn"><svg width="30" height="30"><use href="#t-lasso"/></svg></div>
    <div class="toolbtn"><svg width="30" height="30"><use href="#t-paint"/></svg></div>
    <div class="toolbtn hot"><svg width="36" height="36"><use href="#t-move"/></svg></div>
    <div class="toolbtn"><svg width="32" height="32"><use href="#t-rotate"/></svg></div>
    <div class="toolbtn"><svg width="28" height="28"><use href="#t-scale"/></svg></div>
    <div class="toolsep" id="ts1"></div>
    <div class="toolbtn" id="t7"><svg width="28" height="28"><use href="#t-diamond"/></svg></div>
    <div class="toolbtn"><svg width="28" height="28"><use href="#t-four"/></svg></div>
    <div class="toolbtn"><svg width="28" height="28"><use href="#t-two"/></svg></div>
    <div class="toolbtn hot"><svg width="30" height="30"><use href="#t-outl"/></svg></div>
    <div class="toolsep" id="ts2"></div>
    <div class="toolbtn" id="t11"><svg width="24" height="24"><use href="#t-search"/></svg></div>
    <svg width="30" height="32" class="mayalogo"><use href="#logo"/></svg>
  </div>

  <div id="outliner" class="d-flex flex-column">
    <div class="otab">Outliner</div>
    <div class="opanel">
      <div class="omenu d-flex"><span>Display</span><span>Show</span><span>Help</span></div>
      <div class="osearch d-flex align-items-center">
        <svg width="14" height="16"><use href="#ol-filter"/></svg>
        <div class="osearchbox">Search...</div>
      </div>
      <div class="olistwrap d-flex">
        <div class="olist">
          <div class="orow dim"><svg width="14" height="10"><use href="#cam"/></svg>persp</div>
          <div class="orow dim"><svg width="14" height="10"><use href="#cam"/></svg>top</div>
          <div class="orow dim"><svg width="14" height="10"><use href="#cam"/></svg>front</div>
          <div class="orow dim"><svg width="14" height="10"><use href="#cam"/></svg>side</div>
          <div class="orow"><span class="plus"></span><svg width="14" height="16"><use href="#transic"/></svg>Trans</div>
          <div class="orow"><svg width="14" height="12"><use href="#shapeic"/></svg>GamemodelShape</div>
          <div class="orow"><svg width="14" height="12"><use href="#shapeic"/></svg>GamemodelShape_ncl1_1</div>
          <div class="orow"><svg width="14" height="16"><use href="#seticon"/></svg>defaultLightSet</div>
          <div class="orow"><svg width="14" height="16"><use href="#seticon"/></svg>defaultObjectSet</div>
        </div>
        <div class="vscroll"><div class="tri-up"></div><div class="vthumb"></div><div class="tri-dn"></div></div>
      </div>
      <div class="hscroll"><div class="tri-lt l3"></div><div class="hthumb flex-grow-1 l1"></div><div class="tri-rt"></div><div class="l15"></div></div>
      <div class="griph" id="ogrip"></div>
    </div>
  </div>

  <div id="viewwrap">
    <div class="vmenu d-flex"><span>View</span><span>Shading</span><span>Lighting</span><span>Show</span><span>Renderer</span><span>Panels</span></div>
    <div class="vtools d-flex align-items-center">
      <div class="vbar vbar-s"></div>
      <svg class="i14 l6"><use href="#v-gen"/></svg><svg class="i14 l5"><use href="#v-lock"/></svg><svg class="i14 l5"><use href="#v-gear"/></svg><svg width="8" height="14" class="l8"><use href="#v-mark"/></svg>
      <svg class="i14 l9"><use href="#v-grid2"/></svg><svg class="i14 l5"><use href="#v-frame"/></svg>
      <div class="greenbox l3 d-flex align-items-center justify-content-center"><svg width="11" height="13"><use href="#v-pen"/></svg></div>
      <div class="vbar vbar-s l5"></div>
      <div class="hot l5 tb-blue"><svg class="i14"><use href="#v-grid"/></svg></div>
      <svg class="i14 l3"><use href="#v-film"/></svg><svg class="i14 l5"><use href="#v-dot"/></svg><svg class="i14 l5"><use href="#v-dotd"/></svg><svg class="i14 l5"><use href="#v-res"/></svg><svg class="i14 l5"><use href="#v-img"/></svg><svg class="i14 l5"><use href="#v-t"/></svg>
      <div class="vbar vbar-s l6"></div>
      <svg class="i14 l7"><use href="#c-wire"/></svg>
      <div class="hot l2 tb-blue"><svg class="i16"><use href="#c-solid"/></svg></div>
      <svg class="i14 l4"><use href="#c-half"/></svg><svg class="i14 l5"><use href="#c-tex"/></svg><svg class="i14 l5"><use href="#c-check"/></svg><svg class="i14 l5"><use href="#c-light"/></svg><svg class="i14 l5"><use href="#c-shad"/></svg>
      <div class="vbar vbar-s l5"></div>
      <svg class="i14 l8"><use href="#c-xray"/></svg><svg class="i14 l5"><use href="#c-smooth"/></svg><svg class="i14 l5"><use href="#c-ring"/></svg><svg width="16" height="14" class="l3"><use href="#c-dark"/></svg>
      <div class="vbar vbar-s l6"></div>
      <svg class="i14 l7"><use href="#v-sel"/></svg>
      <div class="vbar vbar-s l6"></div>
      <svg class="i14 l6"><use href="#g-over"/></svg><svg class="i14 l5"><use href="#g-corner"/></svg><svg class="i14 l6"><use href="#g-cut"/></svg>
      <div class="vbar vbar-s l6"></div>
      <svg class="i14 l8"><use href="#g-expo"/></svg><div class="vfield l3">0.00</div><svg width="12" height="14" class="l7"><use href="#g-gam"/></svg><div class="vfield l4">1.00</div>
      <svg width="18" height="17" class="l3"><use href="#v-on"/></svg>
      <div class="combo acescombo l3">ACES 1.0 SDR-video (sRGB)</div>
    </div>
    <div class="viewport3d">
      <svg class="model" width="340" height="240" viewBox="0 0 1020 720">
        <path d="M-141 366 250 366v3L0 374z" fill="#333"/>
        <path d="M605 185C575 120 620 75 672 85s85 50 60 100" fill="none" stroke="#adadad" stroke-width="52"/>
        <path d="M120 313H185C215 340 232 440 226 490 222 525 190 542 160 541 130 542 105 535 96 510 88 480 100 380 102 345 104 325 110 315 120 313Z" fill="#aeaeae" stroke="#b8b8b8" stroke-width="3"/>
        <path d="M225 470c0 30 10 70 35 68 30-5 35-50 30-85l-40-25z" fill="#aaa" stroke="#b8b8b8" stroke-width="2"/>
        <ellipse cx="198" cy="370" rx="38" ry="55" fill="#a8a8a8" stroke="#b8b8b8" stroke-width="2"/>
        <ellipse cx="262" cy="372" rx="35" ry="54" fill="#aaa" stroke="#b8b8b8" stroke-width="2"/>
        <rect x="195" y="345" width="70" height="48" rx="10" fill="#acacac"/>
        <path d="M305 420c-8 30 0 75 25 78 25 0 25-35 20-75z" fill="#afafaf" stroke="#bcbcbc" stroke-width="2"/>
        <ellipse cx="425" cy="368" rx="72" ry="88" fill="#a8a8a8" stroke="#b8b8b8" stroke-width="2"/>
        <path d="M430 296h70v132h-50c-15-30-22-90-20-132z" fill="#a6a6a6"/>
        <rect x="395" y="342" width="95" height="48" rx="20" fill="#adadad"/>
        <path d="M290 300c-10-25 30-30 50-22 35 12 55 50 45 95-8 35-35 45-65 45-25 0-50-25-40-50-5-25 0-55 10-68z" fill="#b2b2b2" stroke="#bcbcbc" stroke-width="2"/>
        <ellipse cx="282" cy="381" rx="33" ry="24" fill="#b4b4b4"/>
        <ellipse cx="676" cy="641" rx="24" ry="26" fill="#bababa"/>
        <ellipse cx="692" cy="390" rx="197" ry="230" fill="url(#bodygrad)"/>
        <path d="M600 570c30-45 100-40 115 35-40 10-90-5-115-35z" fill="#aaa"/>
        <ellipse cx="782" cy="390" rx="106" ry="228" fill="#a9a9a9" stroke="#b8b8b8" stroke-width="3"/>
        <ellipse cx="755" cy="392" rx="82" ry="182" fill="#a3a3a3" stroke="#b2b2b2" stroke-width="3"/>
        <path d="M697 262 780 232 830 320 720 358c-30-5-30-70-23-96z" fill="#a7a7a7"/>
        <path d="M772 130 878 112 902 290c-30 35-90 30-115-20l10-60z" fill="url(#cupgrad)" stroke="#b4b4b4"/>
        <ellipse cx="825" cy="125" rx="52" ry="22" transform="rotate(-8 825 125)" fill="#bababa"/>
        <ellipse cx="825" cy="125" rx="32" ry="12" transform="rotate(-8 825 125)" fill="#9e9e9e"/>
      </svg>
      <svg class="gizmo" width="28" height="26" viewBox="0 0 28 26">
        <path stroke="#2323ff" stroke-width="1.500" d="M5 9h10"/><path stroke="#f00" stroke-width="1.500" d="M15 9h6"/><path stroke="#0f0" stroke-width="1.500" d="M15 9v11"/>
        <path fill="#0f0" d="M12 18h6l-3 5z"/>
        <path fill="none" stroke="#2323ff" stroke-width="1.200" d="M0 2h4L0 6h4"/><path fill="none" stroke="#f00" stroke-width="1.200" d="M23 2l4 4M27 2l-4 4"/>
      </svg>
      <span class="perspname">persp</span>
    </div>
  </div>

  <div id="rightcol" class="d-flex">
    <div class="rpanel">
      <div class="rtop">
        <div class="ricons d-flex">
          <svg class="i14"><use href="#axis3"/></svg><svg class="i14"><use href="#crv"/></svg><svg class="i14"><use href="#pose"/></svg>
        </div>
        <div class="rmenu d-flex"><span>Channels</span><span>Edit</span><span>Object</span><span>Show</span></div>
        <div class="rmsg">Select objects in the scene to view, edit<br>and set keyframes on channels<br>(attributes)</div>
      </div>
      <div class="griph rgrip"></div>
      <div class="layerbox">
        <div class="ltabs d-flex"><div class="ltab on">Display</div><div class="ltab off">Anim</div></div>
        <div class="lpanel">
          <div class="lmenu d-flex"><span>Layers</span><span>Options</span><span>Help</span></div>
          <div class="licons d-flex align-items-center">
            <svg width="15" height="10"><use href="#lup"/></svg><svg width="15" height="10"><use href="#ldn"/></svg><svg width="15" height="11" class="l5"><use href="#ladd"/></svg><svg width="15" height="11"><use href="#lcirc"/></svg>
          </div>
          <div class="llist"></div>
          <div class="hscroll"><div class="tri-lt l1"></div><div class="hthumb l3" id="lthumb"></div><div class="tri-rt ms-auto"></div></div>
        </div>
      </div>
    </div>
    <div class="sidetabs d-flex flex-column">
      <div class="vtab on" id="vt1">Channel Box / Layer Editor</div>
      <div class="vtab" id="vt2">Attribute Editor</div>
      <div class="vtab" id="vt3">Modeling Toolkit</div>
      <div class="vtab" id="vt4">Human IK</div>
    </div>
  </div>
</div>

<div id="topsep2"></div>
<div id="timeline" class="d-flex">
  <div class="grip"></div>
  <div class="tslider" id="ticks"><div class="tcur"></div><span class="tcurnum">0</span></div>
  <div class="fieldbox tfield">0</div>
  <div class="playicons d-flex align-items-center">
    <svg width="16" height="18"><use href="#p-first"/></svg><svg width="12" height="18"><use href="#p-prevk"/></svg><svg width="15" height="18"><use href="#p-stepb"/></svg><svg width="14" height="18"><use href="#p-back"/></svg><svg width="14" height="18"><use href="#p-play"/></svg><svg width="15" height="18"><use href="#p-stepf"/></svg><svg width="12" height="18"><use href="#p-nextk"/></svg><svg width="16" height="18"><use href="#p-last"/></svg>
  </div>
</div>

<div id="rangerow" class="d-flex align-items-center">
  <div class="grip"></div>
  <div class="fieldbox rfield l5">0</div>
  <div class="fieldbox rfield l8">0</div>
  <div class="rslider l12"><div class="rhandle"></div><span class="l4">0</span><span class="ms-auto me-1">100</span><div class="rhandle"></div></div>
  <div class="fieldbox rfield l14">100</div>
  <div class="fieldbox rfield l8">100</div>
  <div class="vbar l5"></div>
  <svg width="15" height="20" class="l14"><use href="#bkm"/></svg>
  <div class="vbar l12"></div>
  <div class="darr l13"></div>
  <div class="outbox l8" id="charb">No Character Set</div>
  <div class="darr l12"></div>
  <div class="outbox l9" id="animb">No Anim Layer</div>
  <div class="vbar l12"></div>
  <div class="combo fps l11">30 fps</div>
  <svg width="18" height="16" class="l14"><use href="#loop"/></svg>
  <svg width="18" height="18" class="l11"><use href="#cache"/></svg>
  <div class="vbar l11"></div>
  <svg width="18" height="18" class="l11"><use href="#speaker"/></svg>
  <div class="redbox l9"><svg width="18" height="20"><use href="#sync"/></svg></div>
  <svg width="18" height="20" class="l9"><use href="#runner"/></svg>
</div>
<div id="botsep"></div>

<div id="helpline" class="d-flex align-items-center">
  <div class="grip"></div>
  <svg class="i16 l5"><use href="#help"/></svg>
  <span class="l8">Move Tool: Select an object to move.</span>
</div>

<script>
  // shelf tabs: name and measured width
  const shelfTabs = [["Curves / Surfaces",108],["Poly Modeling",96],["Sculpting",71],["Rigging",64],["Animation",76],["Rendering",77],["FX",35],["FX Caching",80],["Custom",64],["Arnold",57],["LolMaya",66],["LolMaya_MAPGEO",117],["MASH",53],["Motion Graphics",109],["XGen",49],["ngSkinTools2",91],["TURTLE",60]];
  const shelfEl = document.getElementById('shelfTabs');
  for (const [name, w] of shelfTabs) {
    const t = document.createElement('div');
    t.className = 'stab' + (name === 'Custom' ? ' on' : '');
    t.style.width = w + 'px';
    t.textContent = name;
    shelfEl.appendChild(t);
  }

  // timeline ticks every 2 frames
  const ticks = document.getElementById('ticks');
  for (let i = 0; i <= 100; i += 2) {
    const c = document.createElement('div');
    c.className = 'tcell';
    c.textContent = i;
    ticks.appendChild(c);
  }
</script>
</body>
</html>
